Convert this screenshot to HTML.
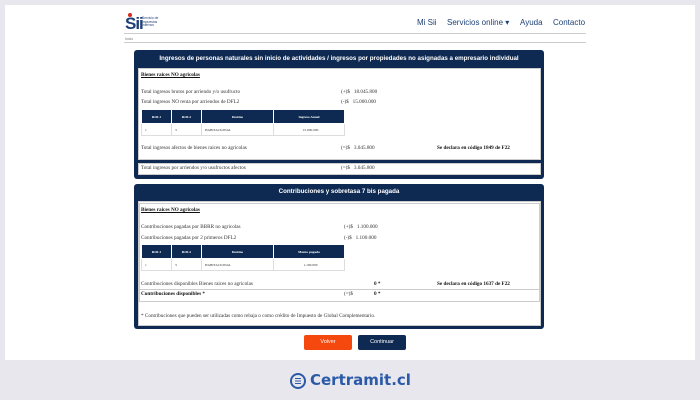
<!DOCTYPE html>
<html><head><meta charset="utf-8"><style>
*{margin:0;padding:0;box-sizing:border-box}
body{width:700px;height:400px;background:#e9e7ee;position:relative;overflow:hidden;font-family:"Liberation Serif",serif;color:#333}
.a{position:absolute}
.white{left:5px;top:5px;width:690px;height:355px;background:#fff}
.nav{font-family:"Liberation Sans",sans-serif;font-size:8px;color:#1d3f77;top:18px;white-space:nowrap}
.panel{left:134px;width:410px;background:#0f2a52;border-radius:3px}
.ph{color:#fff;font-family:"Liberation Sans",sans-serif;font-weight:bold;font-size:6.2px;text-align:center;white-space:nowrap}
.box{background:#fff;border:1px solid #ccc}
.t{font-size:5.2px;color:#333;white-space:nowrap}
.b{font-weight:bold;color:#111}
table{border-collapse:collapse;font-size:3.5px}
th{background:#0f2a52;color:#fff;height:14px;border:1px solid #fff}
td{height:12px;border:1px solid #ddd;padding-left:3px}
.btn{font-family:"Liberation Sans",sans-serif;font-size:5.5px;color:#fff;text-align:center;line-height:15px;border-radius:2px}
</style></head><body>
<div class="a white"></div>
<div class="a" style="left:125px;top:14px;font-family:'Liberation Sans',sans-serif;font-weight:bold;font-size:17px;color:#1d3f77;letter-spacing:-1px">Sii</div>
<div class="a" style="left:128px;top:13px;width:4px;height:4px;border-radius:50%;background:#d52b1e"></div>
<div class="a" style="left:142px;top:17px;font-size:3.3px;line-height:3.6px;color:#1d3f77;font-family:'Liberation Sans',sans-serif">Servicio de<br>Impuestos<br>Internos</div>
<div class="a nav" style="left:417px">Mi Sii</div>
<div class="a nav" style="left:447px">Servicios online ▾</div>
<div class="a nav" style="left:520px">Ayuda</div>
<div class="a nav" style="left:553px">Contacto</div>
<div class="a" style="left:124px;top:33px;width:462px;height:1px;background:#ccc"></div>
<div class="a" style="left:125px;top:37px;font-size:3.5px;color:#777;font-family:'Liberation Sans',sans-serif">Inicio</div>
<div class="a" style="left:124px;top:42px;width:462px;height:1px;background:#ccc"></div>

<div class="a panel" style="top:50px;height:129px">
<div class="ph" style="margin-top:5px">Ingresos de personas naturales sin inicio de actividades / ingresos por propiedades no asignadas a empresario individual</div>
</div>
<div class="a box" style="left:138px;top:68px;width:403px;height:92px"></div>
<div class="a t b" style="left:141px;top:72px;text-decoration:underline">Bienes raices NO agricolas</div>
<div class="a t" style="left:141px;top:89px">Total ingresos brutos por arriendo y/o usufructo</div>
<div class="a t" style="left:341px;top:89px">(+)$ &nbsp;&nbsp;18.045.800</div>
<div class="a t" style="left:141px;top:99px">Total ingresos NO renta por arriendos de DFL2</div>
<div class="a t" style="left:341px;top:99px">(-)$ &nbsp;&nbsp;15.000.000</div>
<table class="a" style="left:141px;top:109px;width:204px"><tr><th style="width:30px">ROL1</th><th style="width:30px">ROL2</th><th style="width:72px">Destino</th><th>Ingreso Anual</th></tr>
<tr><td>1</td><td>3</td><td>HABITACIONAL</td><td style="text-align:center">15.000.000</td></tr></table>
<div class="a t" style="left:141px;top:145px">Total ingresos afectos de bienes raices no agricolas</div>
<div class="a t" style="left:341px;top:145px">(=)$ &nbsp;&nbsp;3.045.800</div>
<div class="a t b" style="left:437px;top:145px">Se declara en código 1849 de F22</div>
<div class="a box" style="left:138px;top:163px;width:403px;height:12px"></div>
<div class="a t" style="left:141px;top:165px">Total ingresos por arriendos y/o usufructos afectos</div>
<div class="a t" style="left:341px;top:165px">(=)$ &nbsp;&nbsp;3.045.800</div>

<div class="a panel" style="top:184px;height:145px">
<div class="ph" style="margin-top:4px">Contribuciones y sobretasa 7 bis pagada</div>
</div>
<div class="a box" style="left:138px;top:201px;width:403px;height:125px"></div>
<div class="a box" style="left:139px;top:203px;width:401px;height:99px;border-color:#ccc"></div>
<div class="a t b" style="left:141px;top:207px;text-decoration:underline">Bienes raices NO agricolas</div>
<div class="a t" style="left:141px;top:224px">Contribuciones pagadas por BBRR no agricolas</div>
<div class="a t" style="left:344px;top:224px">(+)$ &nbsp;&nbsp;1.100.000</div>
<div class="a t" style="left:141px;top:235px">Contribuciones pagadas por 2 primeros DFL2</div>
<div class="a t" style="left:344px;top:235px">(-)$ &nbsp;&nbsp;1.100.000</div>
<table class="a" style="left:141px;top:244px;width:204px"><tr><th style="width:30px">ROL1</th><th style="width:30px">ROL2</th><th style="width:72px">Destino</th><th>Monto pagado</th></tr>
<tr><td>1</td><td>3</td><td>HABITACIONAL</td><td style="text-align:center">1.100.000</td></tr></table>
<div class="a t" style="left:141px;top:281px">Contribuciones disponibles Bienes raices no agricolas</div>
<div class="a t b" style="left:374px;top:281px">0 *</div>
<div class="a t b" style="left:437px;top:281px">Se declara en código 1637 de F22</div>
<div class="a" style="left:139px;top:289px;width:401px;height:1px;background:#ccc"></div>
<div class="a t b" style="left:141px;top:291px">Contribuciones disponibles *</div>
<div class="a t" style="left:344px;top:291px">(=)$</div>
<div class="a t b" style="left:374px;top:291px">0 *</div>
<div class="a t" style="left:141px;top:313px">* Contribuciones que pueden ser utilizadas como rebaja o como crédito de Impuesto de Global Complementario.</div>

<div class="a btn" style="left:304px;top:335px;width:48px;height:15px;background:#f5480f">Volver</div>
<div class="a btn" style="left:358px;top:335px;width:48px;height:15px;background:#0f2a52">Continuar</div>

<div class="a" style="left:290px;top:373px;width:16px;height:16px;border:2px solid #2a5aa8;border-radius:50%"></div>
<div class="a" style="left:295px;top:378px;width:6px;height:1.3px;background:#2a5aa8;box-shadow:0 2.5px 0 #2a5aa8,0 5px 0 #2a5aa8"></div>
<div class="a" style="left:310px;top:371px;font-family:'DejaVu Sans',sans-serif;font-weight:bold;font-size:15px;color:#2a5aa8">Certramit.cl</div>
</body></html>
